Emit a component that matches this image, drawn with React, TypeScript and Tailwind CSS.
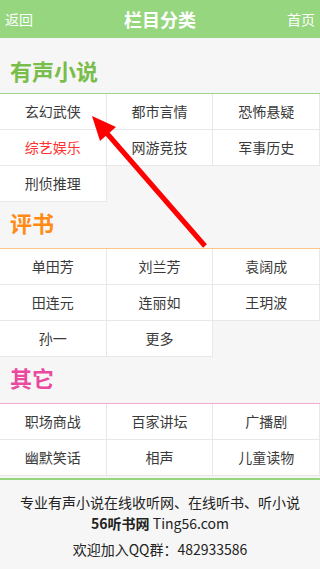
const font = { fontFamily: '"Noto Sans CJK SC", "Noto Sans", sans-serif' };

type Item = { name: string; red?: boolean };

type Section = {
  title: string;
  titleClass: string;
  borderClass: string;
  items: Item[];
  first?: boolean;
};

const sections: Section[] = [
  {
    title: "有声小说",
    titleClass: "text-[#79bd4a]",
    borderClass: "border-[#a3d48a]",
    first: true,
    items: [
      { name: "玄幻武侠" },
      { name: "都市言情" },
      { name: "恐怖悬疑" },
      { name: "综艺娱乐", red: true },
      { name: "网游竞技" },
      { name: "军事历史" },
      { name: "刑侦推理" },
    ],
  },
  {
    title: "评书",
    titleClass: "text-[#ff8a14]",
    borderClass: "border-[#ffc58a]",
    items: [
      { name: "单田芳" },
      { name: "刘兰芳" },
      { name: "袁阔成" },
      { name: "田连元" },
      { name: "连丽如" },
      { name: "王玥波" },
      { name: "孙一" },
      { name: "更多" },
    ],
  },
  {
    title: "其它",
    titleClass: "text-[#e94a9f]",
    borderClass: "border-[#f7a6d2]",
    items: [
      { name: "职场商战" },
      { name: "百家讲坛" },
      { name: "广播剧" },
      { name: "幽默笑话" },
      { name: "相声" },
      { name: "儿童读物" },
    ],
  },
];

function Category({ section }: { section: Section }) {
  return (
    <section>
      <div
        className={`flex items-center border-b pl-[10px] ${section.borderClass} ${section.first ? "h-[46px] pb-[2px]" : "h-[47px] pb-[6px]"}`}
      >
        <h2 className={`text-[22px] font-bold leading-none ${section.titleClass}`}>
          {section.title}
        </h2>
      </div>
      <div className="grid grid-cols-3">
        {section.items.map((it) => (
          <a
            key={it.name}
            className={`flex h-[36px] items-center justify-center border-b border-r border-[#e8e8e8] bg-white text-[14px] ${it.red ? "text-[#ff3030]" : "text-[#3a3a3a]"}`}
          >
            {it.name}
          </a>
        ))}
      </div>
    </section>
  );
}

export default function App() {
  return (
    <div className="relative h-[569px] w-[320px] overflow-hidden bg-[#f6f6f6]" style={font}>
      <header className="mb-[10px] flex h-[38px] items-center justify-between bg-[#95d67e] px-[5px] text-white">
        <span className="text-[14px]">返回</span>
        <h1 className="text-[18px] font-bold">栏目分类</h1>
        <span className="text-[14px]">首页</span>
      </header>

      {sections.map((s) => (
        <Category key={s.title} section={s} />
      ))}

      <footer className="mt-[2px] border-t-2 border-[#95d67e] pt-[12px] text-center text-[14px] text-[#222]">
        <p className="leading-[21px]">专业有声小说在线收听网、在线听书、听小说</p>
        <p className="leading-[21px]">
          <b>56听书网</b> Ting56.com
        </p>
        <p className="mt-[5px] leading-[21px]">欢迎加入QQ群：482933586</p>
      </footer>

      {/* annotation arrow drawn over the page */}
      <svg
        className="pointer-events-none absolute left-0 top-0"
        width="320"
        height="569"
        viewBox="0 0 320 569"
      >
        <line x1="205" y1="246" x2="104" y2="130" stroke="#ff0000" strokeWidth="5" />
        <polygon points="92,116 116,127 100,141" fill="#ff0000" />
      </svg>
    </div>
  );
}
